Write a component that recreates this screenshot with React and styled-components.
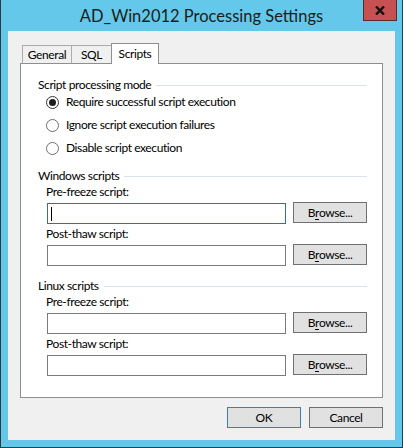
import styled, { createGlobalStyle } from "styled-components";

const GlobalStyle = createGlobalStyle`
  html, body {
    margin: 0;
    padding: 0;
    background: #ffffff;
  }
  * {
    box-sizing: border-box;
  }
`;

const Window = styled.div`
  width: 403px;
  height: 448px;
  display: flex;
  flex-direction: column;
  background: #63c8ea;
  border: 1px solid #2a3a40;
  border-top: none;
  padding: 0 7px 7px 7px;
  font-family: Lato, "Noto Sans", sans-serif;
  font-size: 12px;
  letter-spacing: -0.4px;
  color: #000;
`;

const TitleBar = styled.div`
  position: relative;
  height: 31px;
  flex-shrink: 0;
  display: flex;
  align-items: center;
  justify-content: center;
`;

const Title = styled.div`
  font-size: 16.5px;
  letter-spacing: 0;
  color: #1c1c1c;
  padding-top: 1px;
`;

const CloseButton = styled.div`
  position: absolute;
  top: 0;
  right: -2px;
  width: 34px;
  height: 21px;
  background: #c75050;
  border: 1px solid #5a2d2d;
  border-top: none;
  display: flex;
  align-items: center;
  justify-content: center;
`;

const Client = styled.div`
  flex: 1;
  background: #f0f0f0;
  padding: 12px 12px 12px 12px;
  display: flex;
  flex-direction: column;
`;

const TabStrip = styled.div`
  display: flex;
  align-items: flex-end;
  height: 21px;
  padding-left: 2px;
  margin-bottom: -1px;
  position: relative;
  z-index: 1;
`;

const Tab = styled.div`
  width: ${(p) => p.$w}px;
  height: ${(p) => (p.$active ? 21 : 19)}px;
  margin-left: ${(p) => (p.$first ? 0 : -1)}px;
  border: 1px solid ${(p) => (p.$active ? "#8e8f8f" : "#acacac")};
  border-bottom: ${(p) => (p.$active ? "none" : "1px solid #8e8f8f")};
  background: ${(p) => (p.$active ? "#ffffff" : "#f0f0f0")};
  display: flex;
  align-items: ${(p) => (p.$active ? "flex-start" : "center")};
  padding-top: ${(p) => (p.$active ? 3 : 1)}px;
  justify-content: center;
  line-height: 14px;
`;

const Panel = styled.div`
  height: 335px;
  background: #ffffff;
  border: 1px solid #8e8f8f;
  padding: 14px 15px 0 17px;
  display: flex;
  flex-direction: column;
`;

const Group = styled.div`
  display: flex;
  flex-direction: column;
  margin-top: ${(p) => p.$gap || 0}px;
`;

const GroupHeader = styled.div`
  display: flex;
  align-items: center;
  gap: 5px;
  height: 14px;
  line-height: 14px;
  white-space: nowrap;
  &::after {
    content: "";
    flex: 1;
    height: 1px;
    background: #dce2e9;
  }
`;

const RadioList = styled.div`
  display: flex;
  flex-direction: column;
  gap: 7px;
  margin-top: 2px;
  padding-left: 8px;
`;

const RadioRow = styled.label`
  display: flex;
  align-items: center;
  gap: 7px;
  height: 16px;
  line-height: 16px;
`;

const RadioCircle = styled.span`
  width: 13px;
  height: 13px;
  border-radius: 50%;
  border: 1px solid ${(p) => (p.$checked ? "#333333" : "#6f6f6f")};
  background: #ffffff;
  display: flex;
  align-items: center;
  justify-content: center;
  &::after {
    content: "";
    width: 7px;
    height: 7px;
    border-radius: 50%;
    background: #1e1e1e;
    display: ${(p) => (p.$checked ? "block" : "none")};
  }
`;

const FieldBlock = styled.div`
  display: flex;
  flex-direction: column;
  padding-left: 8px;
  margin-top: ${(p) => p.$gap}px;
`;

const FieldLabel = styled.div`
  height: 14px;
  line-height: 14px;
  margin-bottom: 4px;
`;

const FieldRow = styled.div`
  display: flex;
  align-items: flex-start;
  gap: 7px;
`;

const TextBox = styled.div`
  width: 239px;
  height: 21px;
  margin-left: 1px;
  background: #ffffff;
  border: 1px solid ${(p) => (p.$focused ? "#3a6e98" : "#7a7a7a")};
  display: flex;
  align-items: center;
  padding-left: 3px;
`;

const Caret = styled.span`
  width: 1px;
  height: 14px;
  background: #000;
`;

const Button = styled.div`
  width: 74px;
  height: 21px;
  background: #e1e1e1;
  border: 1px solid ${(p) => (p.$default ? "#3c7fb1" : "#707070")};
  display: flex;
  align-items: center;
  justify-content: center;
  line-height: 14px;
  margin-top: ${(p) => p.$mt || 0}px;
  & u {
    text-decoration: underline;
    text-underline-offset: 2px;
  }
`;

const ButtonBar = styled.div`
  display: flex;
  justify-content: flex-end;
  gap: 8px;
  margin-top: 9px;
`;

function Radio({ checked, children }) {
  return (
    <RadioRow>
      <RadioCircle $checked={checked} />
      {children}
    </RadioRow>
  );
}

function ScriptField({ label, gap, focused }) {
  return (
    <FieldBlock $gap={gap}>
      <FieldLabel>{label}</FieldLabel>
      <FieldRow>
        <TextBox $focused={focused}>{focused && <Caret />}</TextBox>
        <Button $mt={-1}>
          B<u>r</u>owse...
        </Button>
      </FieldRow>
    </FieldBlock>
  );
}

function ScriptGroup({ title, gap }) {
  return (
    <Group $gap={gap}>
      <GroupHeader>{title}</GroupHeader>
      <ScriptField label="Pre-freeze script:" gap={2} focused={title === "Windows scripts"} />
      <ScriptField label="Post-thaw script:" gap={3} />
    </Group>
  );
}

export default function App() {
  return (
    <>
      <GlobalStyle />
      <Window>
        <TitleBar>
          <Title>AD_Win2012 Processing Settings</Title>
          <CloseButton>
            <svg width="10" height="9" viewBox="0 0 10 9">
              <path d="M1 0.5 L9 8.5 M9 0.5 L1 8.5" stroke="#111" strokeWidth="2.4" />
            </svg>
          </CloseButton>
        </TitleBar>
        <Client>
          <TabStrip>
            <Tab $w={50} $first>General</Tab>
            <Tab $w={41}>SQL</Tab>
            <Tab $w={48} $active>Scripts</Tab>
          </TabStrip>
          <Panel>
            <Group>
              <GroupHeader>Script processing mode</GroupHeader>
              <RadioList>
                <Radio checked>Require successful script execution</Radio>
                <Radio>Ignore script execution failures</Radio>
                <Radio>Disable script execution</Radio>
              </RadioList>
            </Group>
            <ScriptGroup title="Windows scripts" gap={13} />
            <ScriptGroup title="Linux scripts" gap={13} />
          </Panel>
          <ButtonBar>
            <Button $default>OK</Button>
            <Button>Cancel</Button>
          </ButtonBar>
        </Client>
      </Window>
    </>
  );
}
